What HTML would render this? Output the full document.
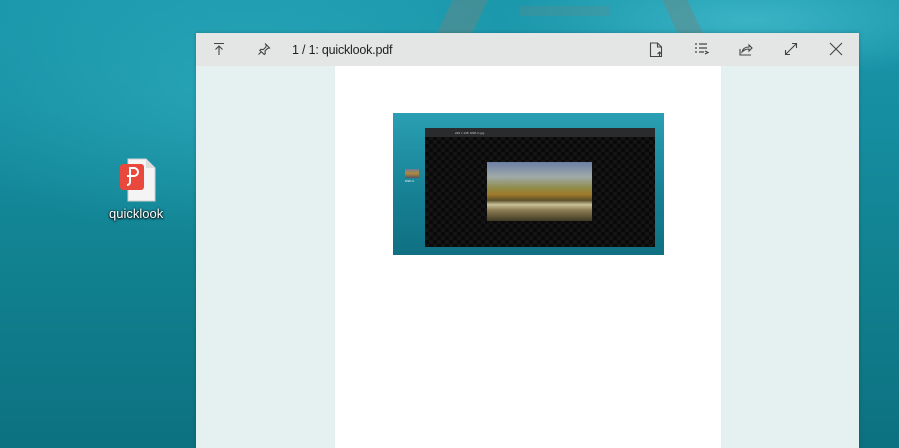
<!DOCTYPE html>
<html><head><style>
*{margin:0;padding:0;box-sizing:border-box}
body{width:899px;height:448px;overflow:hidden;position:relative;font-family:"Liberation Sans",sans-serif;
background:linear-gradient(180deg,#1b97ab 0%,#168ea2 25%,#11818f 60%,#0c7181 100%);}
.glow{position:absolute;left:-100px;top:-60px;width:700px;height:300px;background:radial-gradient(ellipse at center,rgba(60,190,205,.45),rgba(60,190,205,0) 70%)}
.glow2{position:absolute;left:500px;top:-40px;width:500px;height:120px;background:radial-gradient(ellipse at center,rgba(90,210,225,.5),rgba(90,210,225,0) 70%)}
.plank{position:absolute;background:#6f8580;opacity:.45}
.win{position:absolute;left:196px;top:33px;width:663px;height:415px;background:#e5f0f1;box-shadow:0 0 4px rgba(0,0,0,.2)}
.bar{position:absolute;left:0;top:0;width:663px;height:33px;background:#e3e6e5}
.title{position:absolute;left:96px;top:10px;font-size:12.5px;color:#222;letter-spacing:-.2px}
.page{position:absolute;left:139px;top:33px;width:386px;height:382px;background:#fff}
svg.ic{position:absolute;top:9px}
.shot{position:absolute;left:58px;top:47px;width:271px;height:142px;background:linear-gradient(180deg,#2a9fb3,#167f92 60%,#0f7082)}
.inner{position:absolute;left:32px;top:15px;width:230px;height:119px;background:#0a0a0a;
background-image:linear-gradient(45deg,#141414 25%,transparent 25%,transparent 75%,#141414 75%),linear-gradient(45deg,#141414 25%,transparent 25%,transparent 75%,#141414 75%);background-size:8px 8px;background-position:0 0,4px 4px}
.ibar{position:absolute;left:0;top:0;width:230px;height:9px;background:#2a2b2c;font-size:3px;color:#ccc;padding:3px 0 0 30px}
.photo{position:absolute;left:62px;top:34px;width:105px;height:59px;background:linear-gradient(180deg,#6c7fa6 0%,#a0aaa8 25%,#8f8a45 45%,#a07a2a 55%,#5a4f2a 65%,#c9c29a 72%,#8a7a50 82%,#3f3a25 100%)}
</style></head><body>
<div class="glow"></div><div class="glow2"></div>
<div class="plank" style="left:445px;top:0;width:35px;height:33px;transform:skewX(-25deg)"></div>
<div class="plank" style="left:670px;top:0;width:25px;height:33px;transform:skewX(25deg)"></div>
<div class="plank" style="left:520px;top:6px;width:90px;height:10px;opacity:.25"></div>
<svg style="position:absolute;left:118px;top:158px" width="42" height="44" viewBox="0 0 42 44">
<path d="M10 1h18l9 9v33H10z" fill="#f4f4f4" stroke="#d0d0d0"/>
<path d="M28 1v9h9" fill="#ddd"/>
<rect x="2" y="6" width="24" height="26" rx="3" fill="#e9483c"/>
<path d="M9 18h7a4 4 0 0 0 0-8h-4v14a3 3 0 0 1-3 3" fill="none" stroke="#fff" stroke-width="2"/>
</svg>
<div style="position:absolute;left:109px;top:206px;font-size:13px;color:#fff;text-shadow:0 1px 2px #000,0 0 2px #000">quicklook</div>
<div class="win">
<div class="bar">
<svg class="ic" style="left:16px" width="14" height="14" viewBox="0 0 14 14" fill="none" stroke="#444" stroke-width="1.1"><path d="M2 1.5h10M7 13V4M3.5 7.5L7 4l3.5 3.5"/></svg>
<svg class="ic" style="left:61px" width="14" height="14" viewBox="0 0 14 14" fill="none" stroke="#444" stroke-width="1.1"><path d="M8 1.5l4.5 4.5-2 .5-2.5 2.5.3 2.5-1 1L2.8 8.3l1-1 2.5.3 2.5-2.5.5-2zM4.5 9.5L1.5 12.5"/></svg>
<div class="title">1 / 1: quicklook.pdf</div>
<svg class="ic" style="left:453px" width="14" height="16" viewBox="0 0 14 16" fill="none" stroke="#444" stroke-width="1.1"><path d="M1.5 1h7l4 4v9.5h-11zM8.5 1v4h4M10.5 15v-5M8.5 12l2-2 2 2"/></svg>
<svg class="ic" style="left:498px" width="16" height="14" viewBox="0 0 16 14" fill="none" stroke="#444" stroke-width="1.2"><path d="M1 2h2M5 2h8M1 6h2M5 6h8M1 10h2M5 10h5M11 9l3 1.5-3 1.5"/></svg>
<svg class="ic" style="left:542px" width="16" height="15" viewBox="0 0 16 15" fill="none" stroke="#444" stroke-width="1.1"><path d="M2 7v6h11M4 10c1-4 4-5 7-5V3l3 3-3 3V7c-3 0-5 1-7 3z"/></svg>
<svg class="ic" style="left:588px" width="14" height="14" viewBox="0 0 14 14" fill="none" stroke="#444" stroke-width="1.1"><path d="M1.5 12.5l11-11M8 1.5h4.5V6M1.5 8v4.5H6"/></svg>
<svg class="ic" style="left:633px" width="14" height="14" viewBox="0 0 14 14" fill="none" stroke="#444" stroke-width="1.1"><path d="M1 1l12 12M13 1L1 13"/></svg>
</div>
<div class="page">
<div class="shot">
<div style="position:absolute;left:12px;top:56px;width:14px;height:9px;background:linear-gradient(#6c7c99,#b08a3a,#556)"></div>
<div style="position:absolute;left:12px;top:66px;font-size:3px;color:#fff">DSP-C</div>
<div class="inner"><div class="ibar">229 × 135: DSP-C.jpg</div><div class="photo"></div></div>
</div>
</div>
</div>
</body></html>
